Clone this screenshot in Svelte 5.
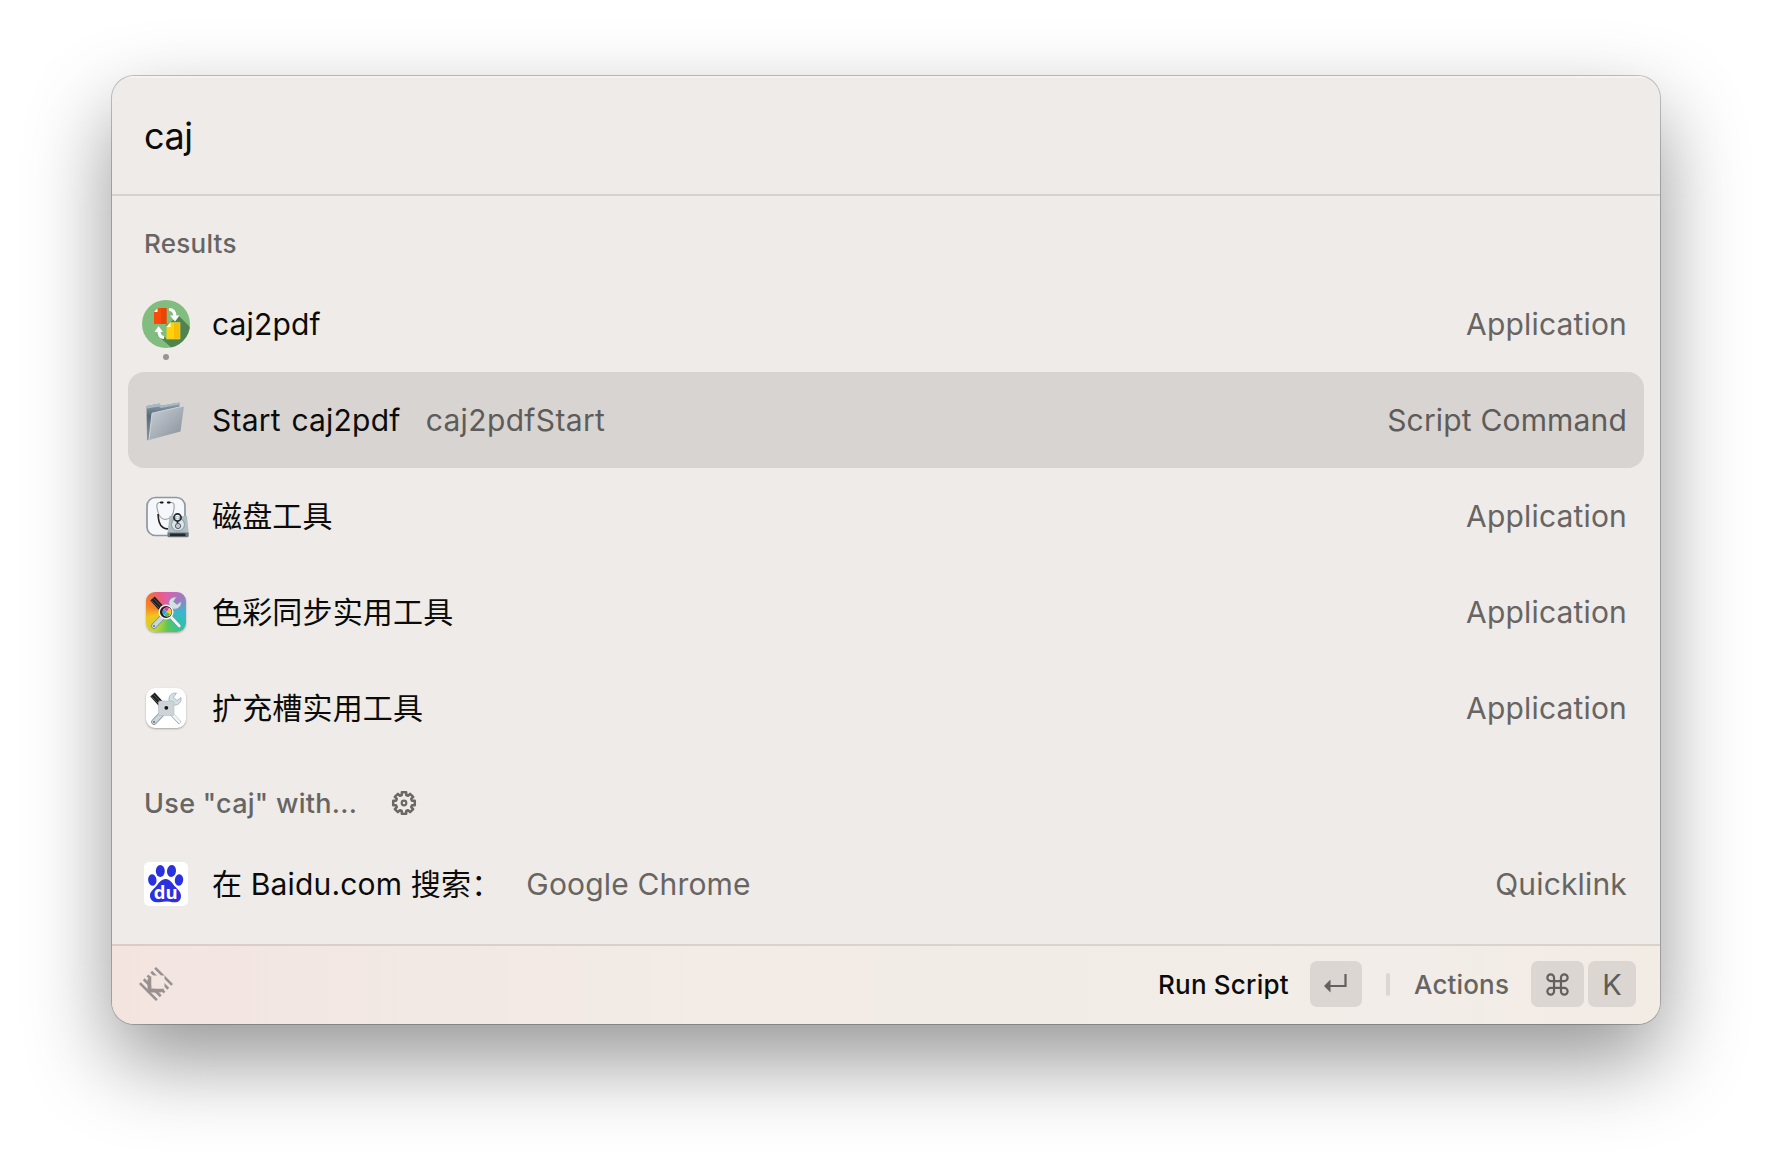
<script>
  const results = [
    { icon: 'convert', title: 'caj2pdf', kind: 'Application', running: true },
    { icon: 'folder', title: 'Start caj2pdf', subtitle: 'caj2pdfStart', kind: 'Script Command', selected: true },
    { icon: 'disk', title: '磁盘工具', kind: 'Application' },
    { icon: 'colorsync', title: '色彩同步实用工具', kind: 'Application' },
    { icon: 'slots', title: '扩充槽实用工具', kind: 'Application' }
  ];
  const fallbacks = [
    { icon: 'baidu', title: '在 Baidu.com 搜索：', subtitle: 'Google Chrome', kind: 'Quicklink' }
  ];

  const teeth = 8;
  const gearPath = (() => {
    const points = [];
    for (let i = 0; i < teeth; i++) {
      for (const [offset, radius] of [[-0.27, 8.3], [-0.2, 11], [0.2, 11], [0.27, 8.3]]) {
        const angle = (i / teeth) * Math.PI * 2 + offset;
        points.push(`${(13 + Math.cos(angle) * radius).toFixed(2)} ${(13 + Math.sin(angle) * radius).toFixed(2)}`);
      }
    }
    return `M${points.join('L')}Z`;
  })();
</script>

{#snippet tools()}
  <path d="M6.500 6.500 L16 17" stroke="#1f1f1f" stroke-width="6" />
  <path d="M5.500 8.500 L13 16 M7.500 6.500 L15 14.500" stroke="#6a6a6a" stroke-width=".7" />
  <path d="M20 20 L34 35" stroke="#7c8790" stroke-width="3.400" />
  <path d="M25 25 L33.300 34" stroke="#f1f5f6" stroke-width="2.800" stroke-linecap="round" />
  <path d="M8 34 L27 14" stroke="#7b8a94" stroke-width="5.600" stroke-linecap="round" />
  <path d="M8 34 L27 14" stroke="#cbd6dc" stroke-width="4.200" stroke-linecap="round" />
  <path d="M30.500 5 C25 4.500 21.500 9 23.500 13.500 L27 17 C32 18 36 14 35 9.500 L31 12.500 L27.500 9.500 Z" fill="#d2dfe5" stroke="#8b9ca5" stroke-width=".6" />
  <circle cx="8" cy="34" r="1.100" fill="#68757e" />
{/snippet}

{#snippet icon(name)}
  {#if name === 'convert'}
    <svg class="icon" width="48" height="48" viewBox="0 0 48 48" fill="none">
      <defs><clipPath id="disc"><circle cx="24" cy="24" r="24" /></clipPath></defs>
      <circle cx="24" cy="24" r="24" fill="#80bd7e" />
      <path clip-path="url(#disc)" d="M24 25 L37 16 L54 33 V50 H32 L14 34 L24 38 Z" fill="#52834f" />
      <path d="M15.500 8 H24.500 V24 H12 V11.500 Z" fill="#fb4b0b" />
      <path d="M19 8 H24.500 V24 H19 Z" fill="#e94408" />
      <path d="M12 12 L15.500 8 V12 Z" fill="#fff" />
      <path d="M28 22.500 H38 V39 H24.500 V26.500 Z" fill="#ffd20a" stroke="#c5d64b" stroke-width=".7" />
      <path d="M32 23 H37.500 V38.500 H32 Z" fill="#f8be05" />
      <path d="M24.500 27 L28.500 22.500 V27 Z" fill="#fff" />
      <path d="M27 9.500 C31.500 9.500 33 12 33 17" stroke="#fff" stroke-width="3.200" />
      <path d="M28 15.500 H37.500 L33 21.500 Z" fill="#fff" />
      <path d="M22 37.500 C18.500 37.500 17 35 17 31" stroke="#fff" stroke-width="3.200" />
      <path d="M12.500 32 H21 L16.500 26 Z" fill="#fff" />
    </svg>
  {:else if name === 'folder'}
    <svg class="icon" width="48" height="48" viewBox="0 -2.500 48 48" fill="none">
      <defs>
        <linearGradient id="front" x1="0" y1="0" x2="1" y2="1">
          <stop offset="0" stop-color="#c9cfd6" /><stop offset=".5" stop-color="#a9b0b8" /><stop offset="1" stop-color="#868e98" />
        </linearGradient>
        <linearGradient id="back" x1="0" y1="0" x2="0" y2="1">
          <stop offset="0" stop-color="#8fa2ae" /><stop offset=".35" stop-color="#566b7a" /><stop offset="1" stop-color="#8799a6" />
        </linearGradient>
      </defs>
      <path d="M4.500 7.500 L17.500 5 L19 7.200 L37.500 4 V9 L40 14 L8 41 L5 42 Z" fill="url(#back)" />
      <path d="M4.500 7.500 L17.500 5 L19 7.200 L37.500 4 V6 L19 9.500 L17 8 L5 10 Z" fill="#a9b8c2" />
      <path d="M10 14.700 L42 7.500 L38.500 33 L7 41.500 Z" fill="url(#front)" />
      <path d="M7 41.500 L10 14.700 L42 7.500" stroke="#d4dae0" stroke-width=".9" />
    </svg>
  {:else if name === 'disk'}
    <svg class="icon" width="48" height="48" viewBox="0 0 48 48" fill="none">
      <rect x="5" y="5.500" width="38" height="38" rx="8.500" fill="#f5f7fa" stroke="#8c999e" stroke-width="1.700" />
      <path d="M20 10.500 H17 C14.500 11 14.500 14 15.500 18 C16.500 23 18 27 23 27.500 C29 27 31.500 22 32 17 C32.500 12 32 10.500 29 10.500 H26" stroke="#969b9e" stroke-width="1.100" />
      <path d="M19 10.500 H20.500 M26 10.500 H27.500" stroke="#111" stroke-width="2.200" stroke-linecap="round" />
      <path d="M16 22 C16.500 28 17 33 21 35.500 C23 36.800 24.500 37 26 36.800" stroke="#222" stroke-width="1.600" />
      <path d="M27.500 24 H45 L46.700 41 H25.500 Z" fill="#afbec5" />
      <path d="M25.500 40.500 H46.700 V43.800 Q46.700 45.300 45 45.300 H27 Q25.500 45.300 25.500 43.800 Z" fill="#6d777c" />
      <path d="M28 42.800 H43.500" stroke="#23292c" stroke-width="2.600" />
      <circle cx="36" cy="32.500" r="6.500" fill="#dce3e6" stroke="#8b9aa1" />
      <circle cx="35.500" cy="25.500" r="3.600" stroke="#1e2427" stroke-width="1.600" />
      <circle cx="35.500" cy="25.500" r="1.300" fill="#eef2f4" />
      <path d="M35.500 29 V31.500" stroke="#1e2427" stroke-width="1.600" />
      <circle cx="36" cy="34" r="2.600" fill="#c3ccd0" stroke="#444f55" stroke-width=".9" />
    </svg>
  {:else if name === 'colorsync'}
    <div class="icon tile rainbow">
      <svg width="40" height="40" viewBox="0 0 40 40" fill="none">
        {@render tools()}
        <circle cx="20" cy="20" r="6.800" fill="#1d1d1f" stroke="#f4f4f4" stroke-width="1.500" />
        <circle cx="21" cy="20" r="4.500" fill="#fff" />
        <path d="M21 20 L18 16.800 A4.400 4.400 0 0 1 23 16.200 Z" fill="#f335a0" />
        <path d="M21 20 L23 16.200 A4.400 4.400 0 0 1 24.500 22.500 Z" fill="#ffcd18" />
        <path d="M21 20 L24.500 22.500 A4.400 4.400 0 0 1 18 23.200 Z" fill="#4ac64a" />
        <path d="M21 20 L18 23.200 A4.400 4.400 0 0 1 18 16.800 Z" fill="#25a9e0" />
      </svg>
    </div>
  {:else if name === 'slots'}
    <div class="icon tile plain">
      <svg width="40" height="40" viewBox="0 0 40 40" fill="none">
        {@render tools()}
        <rect x="12.500" y="13" width="15.500" height="14.500" rx="1.500" fill="#cdd4d8" stroke="#b3bcc1" stroke-width=".6" />
        <circle cx="20.300" cy="19.800" r="1.900" fill="#151515" />
      </svg>
    </div>
  {:else}
    <svg class="icon" width="44" height="44" viewBox="0 0 44 44">
      <rect width="44" height="44" rx="5" fill="#fff" />
      <g fill="#2a32df">
        <ellipse cx="16.300" cy="9" rx="4.500" ry="6" />
        <ellipse cx="27.500" cy="9" rx="4.500" ry="6" transform="rotate(6 27.500 9)" />
        <ellipse cx="8.300" cy="18" rx="4.200" ry="5.700" transform="rotate(-8 8.300 18)" />
        <ellipse cx="35" cy="18" rx="4.200" ry="5.700" transform="rotate(8 35 18)" />
        <path d="M21.700 17 C26 17 28 21 31 24.500 C34 27.500 37 30 37 34 C37 38.500 34 40.500 30.500 40.300 C27 40.200 25 39.500 21.700 39.500 C18 39.500 16 40.500 12.500 40.300 C8.500 40 6 37.500 6 33.500 C6 29.500 9.500 27.500 12 24.500 C15 21 17 17 21.700 17 Z" />
      </g>
      <text class="du" x="21.700" y="37" text-anchor="middle">du</text>
    </svg>
  {/if}
{/snippet}

{#snippet row(item)}
  <li class="row" class:selected={item.selected}>
    <span class="slot">
      {@render icon(item.icon)}
      {#if item.running}<span class="running"></span>{/if}
    </span>
    <span class="title">{item.title}</span>
    {#if item.subtitle}<span class="subtitle">{item.subtitle}</span>{/if}
    <span class="kind">{item.kind}</span>
  </li>
{/snippet}

<main class="stage">
  <section class="window">
    <header class="search">caj</header>
    <div class="list">
      <h2 class="heading">Results</h2>
      <ul>
        {#each results as item}{@render row(item)}{/each}
      </ul>
      <h2 class="heading">
        <span class="prompt">Use "caj" with...</span>
        <svg class="gear" width="26" height="26" viewBox="0 0 26 26" fill="none" stroke="#6b6967" stroke-width="2.500" stroke-linejoin="round">
          <path d={gearPath} />
          <circle cx="13" cy="13" r="2.300" stroke-width="2.200" />
        </svg>
      </h2>
      <ul>
        {#each fallbacks as item}{@render row(item)}{/each}
      </ul>
    </div>
    <footer class="bar">
      <svg class="logo" width="34" height="34" viewBox="0 0 28 28" fill="none">
        <defs>
          <mask id="window-hole">
            <rect width="28" height="28" fill="#fff" />
            <rect x="10.100" y="7" width="10.900" height="10.900" fill="#000" />
          </mask>
        </defs>
        <g mask="url(#window-hole)" stroke="#999190" stroke-width="2.100">
          <path d="M.7 13.300 L14.700 27.300 M3.900 10.100 L17.900 24.100 M7 7 L9 9 M19 19 L21 21 M10.100 3.900 L24.100 17.900 M13.300 .7 L27.300 14.700" />
        </g>
        <path d="M10.100 7.500 V17.900 H21 L18 21 H7 V10 Z" fill="#999190" />
      </svg>
      <span class="primary">Run Script</span>
      <kbd class="key enter">
        <svg width="24" height="20" viewBox="0 0 24 20" fill="none">
          <path d="M21.500 0 V12 H5" stroke="#63605e" stroke-width="2.200" />
          <path d="M0 12 L6.500 5.500 V18.500 Z" fill="#63605e" />
        </svg>
      </kbd>
      <span class="divider"></span>
      <span class="secondary">Actions</span>
      <kbd class="key command">
        <svg width="23" height="23" viewBox="0 0 22 22" fill="none" stroke="#63605e" stroke-width="2.100">
          <path d="M7.700 7.700 H14.300 V14.300 H7.700 Z M7.700 7.700 H4.500 A3.200 3.200 0 1 1 7.700 4.500 Z M14.300 7.700 V4.500 A3.200 3.200 0 1 1 17.500 7.700 Z M14.300 14.300 H17.500 A3.200 3.200 0 1 1 14.300 17.500 Z M7.700 14.300 V17.500 A3.200 3.200 0 1 1 4.500 14.300 Z" />
        </svg>
      </kbd>
      <kbd class="key letter">K</kbd>
    </footer>
  </section>
</main>

<style>
  :global(body) { background: #fff; }
  .stage {
    box-sizing: border-box;
    width: 1772px;
    height: 1172px;
    padding: 76px 112px 0;
    overflow: hidden;
    background: #fff;
    font-family: Inter, "Noto Sans CJK SC", sans-serif;
    color: #0b0b0b;
  }
  .window {
    width: 1548px;
    height: 948px;
    display: flex;
    flex-direction: column;
    overflow: hidden;
    border-radius: 22px;
    background: #efebe8;
    box-shadow: 0 0 0 1px rgba(0, 0, 0, .22), 0 36px 84px rgba(0, 0, 0, .42);
  }
  .search {
    box-sizing: border-box;
    height: 120px;
    padding: 0 32px;
    border-bottom: 2px solid #d6d2cf;
    box-shadow: inset 0 2px #f5f2f0;
    font-size: 36px;
    letter-spacing: -.4px;
    line-height: 121px;
  }
  .list { height: 748px; }
  ul { margin: 0; padding: 0 16px; list-style: none; }
  .heading {
    display: flex;
    align-items: center;
    height: 80px;
    box-sizing: border-box;
    margin: 0;
    padding: 15px 32px 0;
    font-size: 26px;
    font-weight: 500;
    letter-spacing: .25px;
    color: #676563;
  }
  .prompt { width: 247px; font-size: 27px; letter-spacing: .3px; }
  .gear { position: relative; top: -1px; }
  .row {
    display: flex;
    align-items: center;
    height: 96px;
    box-sizing: border-box;
    padding: 0 17px 0 14px;
    border-radius: 16px;
    font-size: 30px;
    line-height: 36px;
    letter-spacing: .17px;
    white-space: nowrap;
  }
  .selected { background: #d8d4d1; }
  .selected .title { letter-spacing: .22px; word-spacing: 2px; }
  .selected .subtitle { letter-spacing: .36px; }
  .slot {
    position: relative;
    display: flex;
    flex: none;
    align-items: center;
    justify-content: center;
    width: 48px;
    height: 48px;
    margin-right: 22px;
  }
  .icon { display: block; flex: none; }
  .running {
    position: absolute;
    left: 21px;
    top: 54px;
    width: 6px;
    height: 6px;
    border-radius: 50%;
    background: #979492;
  }
  .tile {
    width: 40px;
    height: 40px;
    border-radius: 9px;
    overflow: hidden;
    box-shadow: 0 1px 2px rgba(0, 0, 0, .3);
  }
  .rainbow {
    background: conic-gradient(from 0deg, #e05fa9, #a377c0 12%, #3bb6d0 25%, #32bfa9 37%, #5cc659 48%, #b8d634 58%, #f2c51c 70%, #f58426 80%, #f0713b 87%, #e95c87 95%, #e05fa9);
  }
  .plain { background: #fff; }
  .du {
    font: 700 18.5px "Open Sans", sans-serif;
    letter-spacing: 0;
    fill: #fff;
  }
  .subtitle { margin-left: 25px; color: #676563; }
  .kind { margin-left: auto; color: #676563; }
  .selected .subtitle, .selected .kind { color: #5e5c5a; }
  .bar {
    display: flex;
    align-items: center;
    box-sizing: border-box;
    height: 80px;
    padding: 0 24px 2px 27px;
    border-top: 2px solid rgba(100, 85, 75, .17);
    background: linear-gradient(90deg, #f3e4e0, #f3e6e2 7%, #f2e9e4 22%, #f2ece7 50%, #f2ede8 85%, #f3ebe6 94%, #f2ece4);
    font-size: 26px;
    font-weight: 500;
  }
  .primary { width: 129px; margin-left: auto; white-space: nowrap; letter-spacing: .2px; }
  .secondary { width: 95px; color: #676563; letter-spacing: .15px; }
  .key {
    display: flex;
    align-items: center;
    justify-content: center;
    height: 46px;
    border-radius: 7px;
    background: #dbd6d1;
    font: 400 29px Inter, sans-serif;
    color: #5f5c5a;
  }
  .enter { width: 52px; margin-left: 23px; }
  .divider { width: 4px; height: 23px; margin: 0 24px; border-radius: 2px; background: #dcd7d2; }
  .command { width: 53px; margin-left: 22px; }
  .letter { width: 48px; margin-left: 4px; }
</style>
